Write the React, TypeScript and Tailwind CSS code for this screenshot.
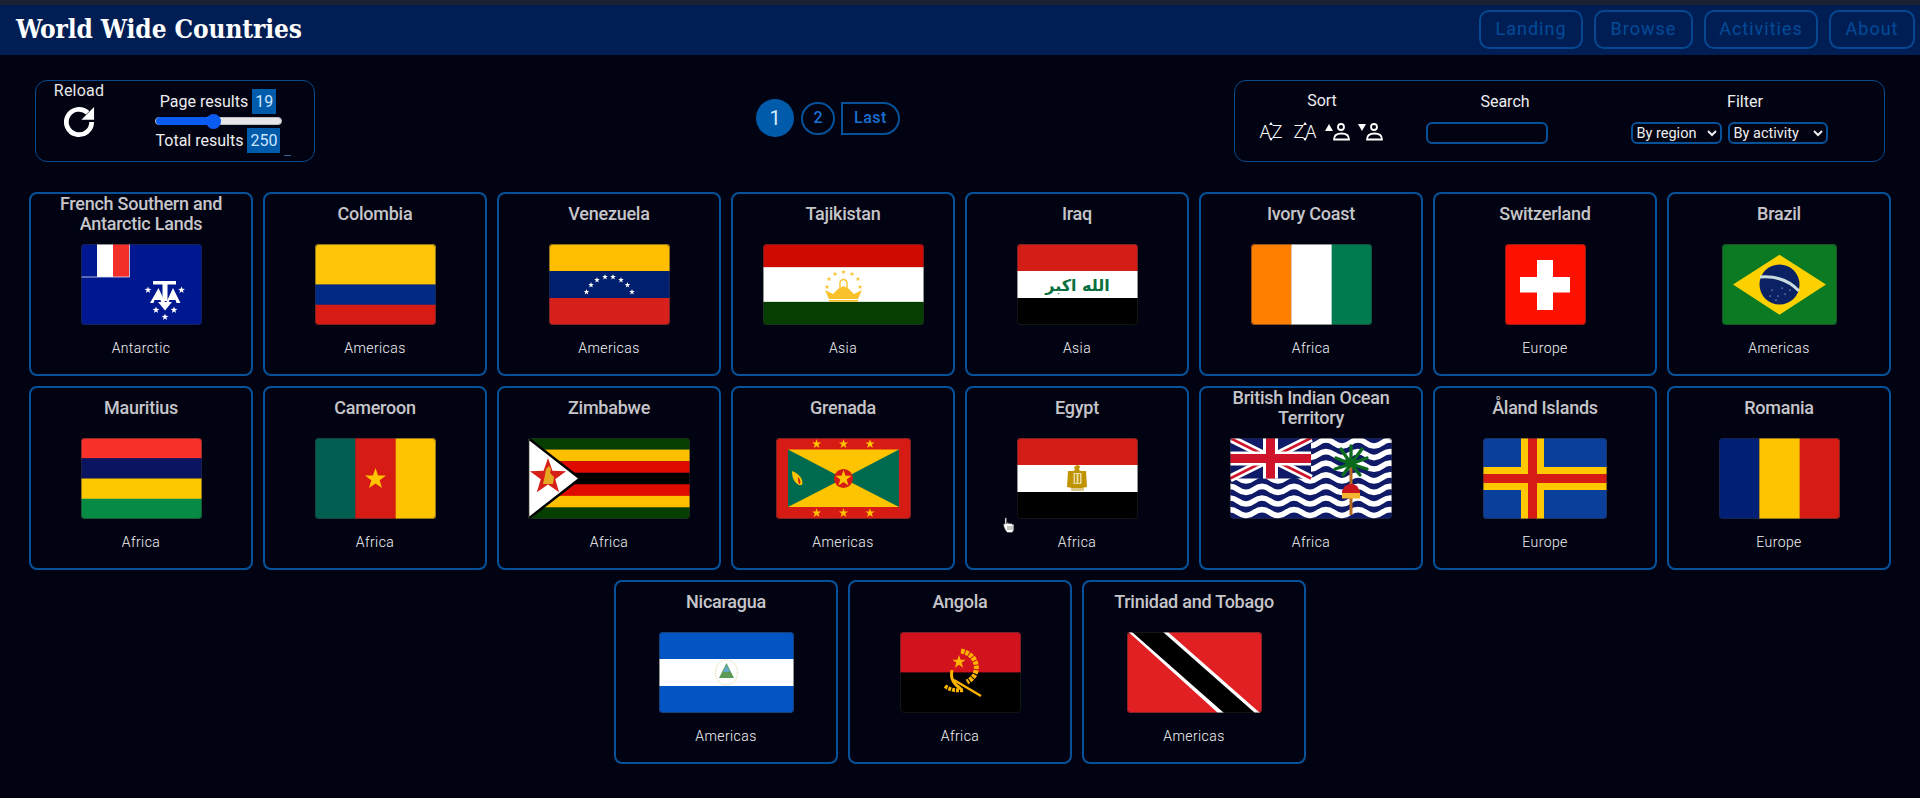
import React from "react";

const Star = ({ cx, cy, r, fill = "#fff" }: { cx: number; cy: number; r: number; fill?: string }) => {
  const pts: string[] = [];
  for (let i = 0; i < 10; i++) {
    const rad = i % 2 === 0 ? r : r * 0.4;
    const a = (-90 + i * 36) * (Math.PI / 180);
    pts.push(`${(cx + rad * Math.cos(a)).toFixed(2)},${(cy + rad * Math.sin(a)).toFixed(2)}`);
  }
  return <polygon points={pts.join(" ")} fill={fill} />;
};

const HStripes = ({ w, h, bands }: { w: number; h: number; bands: [string, number][] }) => {
  const total = bands.reduce((a, b) => a + b[1], 0);
  let y = 0;
  return (
    <>
      {bands.map(([c, n], i) => {
        const hh = (n / total) * h;
        const el = <rect key={i} x={0} y={y} width={w} height={hh + 0.3} fill={c} />;
        y += hh;
        return el;
      })}
    </>
  );
};

const VStripes = ({ w, h, bands }: { w: number; h: number; bands: string[] }) => (
  <>
    {bands.map((c, i) => (
      <rect key={i} x={(i * w) / bands.length} y={0} width={w / bands.length + 0.3} height={h} fill={c} />
    ))}
  </>
);

const Waves = () => {
  const rows = [];
  for (let i = 0; i < 7; i++) {
    const y = 5 + i * 11.6;
    let d = `M-8 ${y}`;
    for (let x = -8; x < 170; x += 32) {
      d += ` q8 -6 16 0 t16 0`;
    }
    rows.push(<path key={i} d={d} fill="none" stroke="#fff" strokeWidth={5.6} />);
  }
  return <>{rows}</>;
};

const flags: Record<string, { w: number; draw: React.ReactNode }> = {
  atf: {
    w: 121,
    draw: (
      <>
        <rect width="121" height="81" fill="#00188f" />
        <rect x="16" width="16" height="33" fill="#fff" />
        <rect x="32" width="16" height="33" fill="#f32f2a" />
        <path d="M0 33H48.500V0" fill="none" stroke="#dfe3f5" strokeWidth="0.8" />
        <g fill="#fff">
          <rect x="72" y="37" width="23" height="3.500" />
          <rect x="81.500" y="37" width="5" height="20" />
          <path d="M69 59l8.500 -15 7 15h-4l-1 -3h-6l-1 3z" />
          <path d="M85 59l7 -15 7.500 15h-4l-1 -3h-6l-1 3z" />
          <path d="M77 58h14l-7 8.500z" />
        </g>
        <Star cx={67} cy={46} r={3.6} />
        <Star cx={100.5} cy={46} r={3.6} />
        <Star cx={75} cy={66} r={3.6} />
        <Star cx={93} cy={66} r={3.6} />
        <Star cx={84} cy={73} r={3.6} />
      </>
    ),
  },
  col: { w: 121, draw: <HStripes w={121} h={81} bands={[["#fec408", 2], ["#002a83", 1], ["#d51b14", 1]]} /> },
  ven: {
    w: 121,
    draw: (
      <>
        <HStripes w={121} h={81} bands={[["#ffbe00", 1], ["#001f6e", 1], ["#d71f1b", 1]]} />
        {[[37.5, 48], [42, 41], [48, 36], [56, 33], [64, 33], [72, 36], [78.5, 41], [83, 48]].map(([x, y], i) => (
          <Star key={i} cx={x} cy={y} r={3} />
        ))}
      </>
    ),
  },
  tjk: {
    w: 161,
    draw: (
      <>
        <HStripes w={161} h={81} bands={[["#cf0a00", 2], ["#fff", 3], ["#053e00", 2]]} />
        <g fill="#f9c22d">
          <path d="M66 55L62 46L70 50L75 45L80.500 42L86 45L91 50L99 46L95 55z" />
          <rect x="66" y="56" width="29" height="1.800" />
        </g>
        <path d="M77 44v-5a3.500 3.500 0 0 1 7 0v5" fill="none" stroke="#f9c22d" strokeWidth="1.400" />
        {[[80.5, 28], [72, 30], [89, 30], [66, 35], [95, 35], [64, 43], [97, 43]].map(([x, y], i) => (
          <Star key={i} cx={x} cy={y} r={2.6} fill="#f9c22d" />
        ))}
      </>
    ),
  },
  irq: {
    w: 121,
    draw: (
      <>
        <HStripes w={121} h={81} bands={[["#d51d17", 1], ["#fff", 1], ["#000", 1]]} />
        <text x="60.500" y="47" textAnchor="middle" fontSize="16" fontWeight="700" fontFamily="'DejaVu Sans', sans-serif" fill="#0a7040">
          الله اكبر
        </text>
      </>
    ),
  },
  civ: { w: 121, draw: <VStripes w={121} h={81} bands={["#ff7f00", "#fff", "#007b4f"]} /> },
  che: {
    w: 81,
    draw: (
      <>
        <rect width="81" height="81" fill="#fe1100" />
        <rect x="32" y="16" width="16" height="50" fill="#fff" />
        <rect x="15" y="33" width="50" height="15.500" fill="#fff" />
      </>
    ),
  },
  bra: {
    w: 115,
    draw: (
      <>
        <rect width="115" height="81" fill="#0b7a22" />
        <polygon points="11,40.500 57.500,10.700 104,40.500 57.500,70.700" fill="#fdd000" />
        <ellipse cx="57.500" cy="40.500" rx="20" ry="20" fill="#0a2164" />
        <path d="M38 33q24 -2 39 14" stroke="#c9dde0" strokeWidth="3" fill="none" />
        {[[50, 46], [56, 52], [63, 50], [48, 52], [60, 44], [68, 46], [54, 56]].map(([x, y], i) => (
          <circle key={i} cx={x} cy={y} r={0.6} fill="#fff" />
        ))}
      </>
    ),
  },
  mus: { w: 121, draw: <HStripes w={121} h={81} bands={[["#f9312a", 1], ["#0b1460", 1], ["#fec800", 1], ["#068a44", 1]]} /> },
  cmr: {
    w: 121,
    draw: (
      <>
        <VStripes w={121} h={81} bands={["#005f50", "#d51b14", "#fec400"]} />
        <Star cx={60.500} cy={41} r={11} fill="#fec400" />
      </>
    ),
  },
  zwe: {
    w: 162,
    draw: (
      <>
        <HStripes w={162} h={81} bands={[["#053e00", 1], ["#fdbf00", 1], ["#df0b00", 1], ["#000", 1], ["#df0b00", 1], ["#fdbf00", 1], ["#053e00", 1]]} />
        <polygon points="0,0 54,40.500 0,81" fill="#000" />
        <polygon points="0,0 52,40.500 0,81" fill="#fff" stroke="#000" strokeWidth="2.500" />
        <Star cx={20} cy={39} r={19} fill="#d8201a" />
        <path d="M15 46l2 -9 1 -6 3 -3 2 3 -1 4 4 4 -1 7z" fill="#e6a820" />
      </>
    ),
  },
  grd: {
    w: 135,
    draw: (
      <>
        <rect width="135" height="81" fill="#d51b14" />
        <rect x="12" y="11.500" width="111" height="57.500" fill="#fec400" />
        <polygon points="12,11.500 67.500,40.500 12,69" fill="#006a4e" />
        <polygon points="123,11.500 67.500,40.500 123,69" fill="#006a4e" />
        <circle cx="67.500" cy="40.500" r="9.500" fill="#d51b14" />
        <Star cx={67.500} cy={40.500} r={8.500} fill="#fec400" />
        {[40.6, 67.5, 94].map((x) => (
          <React.Fragment key={x}>
            <Star cx={x} cy={6} r={4.800} fill="#fec400" />
            <Star cx={x} cy={75} r={4.800} fill="#fec400" />
          </React.Fragment>
        ))}
        <path d="M23 47c-4 -2 -7 -6 -7 -14 6 2 12 8 10 14z" fill="#fec400" />
        <path d="M23 46c-1 -3 -1 -5 -1 -7 2 2 3 4 2 7z" fill="#d51b14" />
      </>
    ),
  },
  egy: {
    w: 121,
    draw: (
      <>
        <HStripes w={121} h={81} bands={[["#d51d17", 1], ["#fff", 1], ["#000", 1]]} />
        <path d="M60 27l3 1 -1 4 2 1 5 0 1 16 -5 1h-10l-5 -1 1 -16h5l2 -1 -1 -3z" fill="#c09300" />
        <rect x="56.500" y="35" width="8" height="11" fill="#e8d9a0" />
        <rect x="58" y="36" width="1.500" height="9" fill="#c09300" />
        <rect x="61.500" y="36" width="1.500" height="9" fill="#c09300" />
        <rect x="54" y="50" width="13" height="3" fill="#dcc88a" />
      </>
    ),
  },
  iot: {
    w: 162,
    draw: (
      <>
        <rect width="162" height="81" fill="#0f1a68" />
        <Waves />
        <rect width="81" height="40.500" fill="#0f1a68" />
        <path d="M0 0L81 40.500M81 0L0 40.500" stroke="#fff" strokeWidth="8" />
        <path d="M0 0L81 40.500M81 0L0 40.500" stroke="#cf142b" strokeWidth="2.600" />
        <rect x="33" width="15" height="40.500" fill="#fff" />
        <rect y="13.500" width="81" height="14" fill="#fff" />
        <rect x="36" width="9" height="40.500" fill="#cf142b" />
        <rect y="16" width="81" height="9" fill="#cf142b" />
        <rect x="119.500" y="28" width="3" height="49" fill="#b5691f" />
        <g stroke="#0a6b1c" strokeWidth="3.300" strokeLinecap="round">
          <path d="M121 26L121 8" />
          <path d="M121 26L111 11" />
          <path d="M121 26L132 11" />
          <path d="M121 26L106 20" />
          <path d="M121 26L137 20" />
          <path d="M121 26L105 31" />
          <path d="M121 26L137 31" />
          <path d="M121 26L113 37" />
          <path d="M121 26L130 37" />
        </g>
        <path d="M112 53l3 -5 4 -2h4l4 2 3 5v4h-18z" fill="#c9141d" />
        <rect x="112" y="55" width="18" height="5.500" fill="#f3b52f" />
      </>
    ),
  },
  ala: {
    w: 124,
    draw: (
      <>
        <rect width="124" height="81" fill="#0a3f9c" />
        <rect x="38" width="23" height="81" fill="#ffc800" />
        <rect y="29" width="124" height="23" fill="#ffc800" />
        <rect x="45" width="9" height="81" fill="#d51b14" />
        <rect y="36" width="124" height="9" fill="#d51b14" />
      </>
    ),
  },
  rou: { w: 121, draw: <VStripes w={121} h={81} bands={["#001f75", "#fec400", "#d51b14"]} /> },
  nic: {
    w: 135,
    draw: (
      <>
        <HStripes w={135} h={81} bands={[["#0355c4", 1], ["#fff", 1], ["#0355c4", 1]]} />
        <ellipse cx="67.500" cy="40.500" rx="11" ry="12.500" fill="none" stroke="#e4d9a5" strokeWidth="1" strokeDasharray="1.500 1" />
        <polygon points="67.500,31 75,46 60,46" fill="#5d9c57" />
        <polygon points="67.500,33 71,40 64,40" fill="#64a7c9" />
      </>
    ),
  },
  ago: {
    w: 121,
    draw: (
      <>
        <HStripes w={121} h={81} bands={[["#d2131d", 1], ["#000", 1]]} />
        <path d="M61 19C72 21 78 30 76 39C75 44 72 47 67 50" fill="none" stroke="#fdb300" strokeWidth="5" strokeDasharray="3.500 1" />
        <path d="M52 38C50 47 54 52 61 57" fill="none" stroke="#fdb300" strokeWidth="3" />
        <path d="M45 54C50 58 56 59 63 58" fill="none" stroke="#fdb300" strokeWidth="4" strokeDasharray="3 1" />
        <path d="M54 48L81 64" stroke="#fdb300" strokeWidth="2.400" />
        <Star cx={59} cy={30} r={7} fill="#fdb300" />
      </>
    ),
  },
  tto: {
    w: 135,
    draw: (
      <>
        <rect width="135" height="81" fill="#e12024" />
        <polygon points="1.500,0 41,0 133,81 91,81" fill="#fff" />
        <polygon points="5,0 36,0 128,81 97,81" fill="#000" />
      </>
    ),
  },
};

const countries = [
  ["French Southern and Antarctic Lands", "atf", "Antarctic"],
  ["Colombia", "col", "Americas"],
  ["Venezuela", "ven", "Americas"],
  ["Tajikistan", "tjk", "Asia"],
  ["Iraq", "irq", "Asia"],
  ["Ivory Coast", "civ", "Africa"],
  ["Switzerland", "che", "Europe"],
  ["Brazil", "bra", "Americas"],
  ["Mauritius", "mus", "Africa"],
  ["Cameroon", "cmr", "Africa"],
  ["Zimbabwe", "zwe", "Africa"],
  ["Grenada", "grd", "Americas"],
  ["Egypt", "egy", "Africa"],
  ["British Indian Ocean Territory", "iot", "Africa"],
  ["Åland Islands", "ala", "Europe"],
  ["Romania", "rou", "Europe"],
  ["Nicaragua", "nic", "Americas"],
  ["Angola", "ago", "Africa"],
  ["Trinidad and Tobago", "tto", "Americas"],
];

const Card = ({ name, code, region }: { name: string; code: string; region: string }) => {
  const f = flags[code];
  return (
    <div className="flex h-[184px] w-[224px] flex-col items-center rounded-[8px] border-2 border-[#05529b]">
      <div className="mb-[10px] flex h-[40px] w-full items-center justify-center px-2 text-center text-[18px] leading-[20px] font-medium tracking-[-0.25px] text-[#c6c6ca]">
        {name}
      </div>
      <svg
        width={f.w}
        height={81}
        viewBox={`0 0 ${f.w} 81`}
        className="shrink-0 rounded-[4px] outline outline-1 -outline-offset-1 outline-[#2a2a3080]"
      >
        {f.draw}
      </svg>
      <div className="mt-[14px] text-[14px] leading-[18px] font-light tracking-[0.4px] text-[#f4f4f6]">{region}</div>
    </div>
  );
};

const NavButton = ({ label, w }: { label: string; w: string }) => (
  <button className={`flex h-[39px] items-center justify-center rounded-[10px] border-2 border-[#064792] pb-[2px] text-[18px] tracking-[1px] text-[#034b98] ${w}`}>
    {label}
  </button>
);

const SortAlpha = ({ a, b }: { a: string; b: string }) => (
  <span className="relative flex h-[24px] w-[21px] items-center justify-center gap-[1px] text-[18px] leading-none font-light text-white">
    <span>{a}</span>
    <span>{b}</span>
    <span className="absolute top-[2px] left-[8px] h-0 w-0 border-x-[2px] border-b-[3px] border-x-transparent border-b-white" />
    <span className="absolute bottom-[3px] left-[8px] h-0 w-0 border-x-[2px] border-t-[3px] border-x-transparent border-t-white" />
  </span>
);

const SortPerson = ({ up }: { up: boolean }) => (
  <svg width="26" height="24" viewBox="0 0 26 24" className="shrink-0">
    <polygon points={up ? "0,11 8,11 4,4" : "0,4 8,4 4,11"} fill="#fff" />
    <circle cx="16" cy="7" r="3" fill="none" stroke="#fff" strokeWidth="1.800" />
    <path d="M9 19.500c0 -4 3 -6 7.500 -6s7.500 2 7.500 6z" fill="none" stroke="#fff" strokeWidth="1.800" />
  </svg>
);

const Cursor = () => (
  <svg width="12" height="16" viewBox="0 0 12 16" className="absolute top-[517px] left-[1003px]">
    <path d="M2 1.500c0 -1 1.600 -1 1.600 0v5.500l.4 -1c1 -.6 1.700 0 1.700 .8 .3 -.8 1.700 -.7 1.800 .2 .4 -.7 1.700 -.4 1.800 .5 .5 -.4 1.500 0 1.500 1v3.500c0 1.500 -1 3 -2 3.500H4.500c-1.500 -1 -2.500 -3 -3.500 -5.500L.5 7.500c0 -.7 .8 -.9 1.500 -.3z" fill="#fff" stroke="#333" strokeWidth="0.500" />
    <path d="M5 9v4M7 9v4M9 9v4" stroke="#444" strokeWidth="0.600" />
  </svg>
);

export default function App() {
  return (
    <div className="relative min-h-[798px] bg-[#020312] font-['Roboto',sans-serif] text-white">
      <div className="h-[5px] bg-[#1d2030]" />
      <header className="flex h-[50px] items-center justify-between bg-[#001e54] pr-[5px] pl-[16px]">
        <h1 className="pb-[2px] font-['DejaVu_Serif_Condensed','DejaVu_Serif',serif] text-[26px] font-bold tracking-[-0.1px] text-white">
          World Wide Countries
        </h1>
        <nav className="-mt-[1px] flex gap-[11px]">
          <NavButton label="Landing" w="w-[104px]" />
          <NavButton label="Browse" w="w-[99px]" />
          <NavButton label="Activities" w="w-[114px]" />
          <NavButton label="About" w="w-[86px]" />
        </nav>
      </header>

      <section className="flex h-[137px] items-start pt-[25px] pr-[35px] pl-[35px]">
        <div className="relative flex h-[82px] w-[280px] rounded-[12px] border border-[#0a4a8c]">
          <div className="flex w-[86px] flex-col items-center text-[16px] leading-[18px]">
            <span className="mt-[1px] tracking-[0.2px] text-[#e8e8ea]">Reload</span>
            <svg width="38" height="38" viewBox="0 0 24 24" className="mt-[3px]" fill="none" stroke="#fff" strokeWidth="3">
              <path d="M20 12a8 8 0 1 1 -2.500 -5.800" />
              <polygon points="21.500,2.500 21.500,10.500 13.500,10.500" fill="#fff" stroke="none" />
            </svg>
          </div>
          <div className="flex flex-1 flex-col items-center pt-[8px] text-[16px] leading-[25px] text-[#eeeef0]">
            <div className="flex items-center gap-[4px]">
              <span>Page results</span>
              <span className="w-[24px] bg-[#015bab] text-center text-[#cde6ff]">19</span>
            </div>
            <div className="my-[3px] flex h-[8px] w-[127px] items-center rounded-full border border-[#bdbdc0] bg-[#e6e6e8]">
              <div className="h-[8px] w-[51px] rounded-l-full bg-[#0a5cf0]" />
              <div className="-ml-[1px] h-[15px] w-[15px] shrink-0 rounded-full bg-[#0a5cf0]" />
            </div>
            <div className="flex items-center gap-[4px]">
              <span>Total results</span>
              <span className="w-[33px] bg-[#015bab] text-center text-[#cde6ff]">250</span>
            </div>
          </div>
          <span className="absolute right-[23px] bottom-[5px] h-[1px] w-[7px] bg-[#3f5f88]" />
        </div>

        <div className="mt-[19px] ml-[441px] flex items-center gap-[6px]">
          <div className="flex h-[38px] w-[38px] items-center justify-center rounded-full bg-[#015bab] text-[20px] text-[#d7ecff]">1</div>
          <div className="ml-[1px] flex h-[33px] w-[34px] items-center justify-center rounded-full border-2 border-[#05529b] text-[16px] font-medium text-[#1a6fd0]">2</div>
          <div className="flex h-[33px] w-[59px] items-center justify-center rounded-r-full border-2 border-[#05529b] text-[16px] font-medium tracking-[0.5px] text-[#1a6fd0]">Last</div>
        </div>

        <div className="ml-auto flex h-[82px] w-[651px] rounded-[12px] border border-[#0a4a8c] text-[16px] text-[#eeeef0]">
          <div className="flex w-[174px] flex-col items-center pt-[10px]">
            <span className="leading-[20px]">Sort</span>
            <div className="mt-[9px] flex items-center">
              <SortAlpha a="A" b="Z" />
              <div className="ml-[13px]">
                <SortAlpha a="Z" b="A" />
              </div>
              <div className="ml-[9px] flex gap-[7px]">
                <SortPerson up />
                <SortPerson up={false} />
              </div>
            </div>
          </div>
          <div className="flex w-[155px] flex-col items-center pt-[11px]">
            <span className="ml-[37px] leading-[20px]">Search</span>
            <input className="mt-[10px] h-[22px] w-[122px] rounded-[6px] border-2 border-[#05529b] bg-transparent" />
          </div>
          <div className="flex flex-1 flex-col items-center pt-[11px]">
            <span className="ml-[42px] leading-[20px]">Filter</span>
            <div className="mt-[10px] ml-[10px] flex gap-[6px]">
              <select className="h-[22px] w-[91px] rounded-[6px] border-2 border-[#05529b] bg-transparent text-[14.5px] text-[#eeeef0]">
                <option className="text-black">By region</option>
              </select>
              <select className="h-[22px] w-[100px] rounded-[6px] border-2 border-[#05529b] bg-transparent text-[14.5px] text-[#eeeef0]">
                <option className="text-black">By activity</option>
              </select>
            </div>
          </div>
        </div>
      </section>

      <main className="flex flex-wrap justify-center gap-[10px] px-[29px]">
        {countries.map(([n, c, r]) => (
          <Card key={n} name={n} code={c} region={r} />
        ))}
      </main>
      <Cursor />
    </div>
  );
}
